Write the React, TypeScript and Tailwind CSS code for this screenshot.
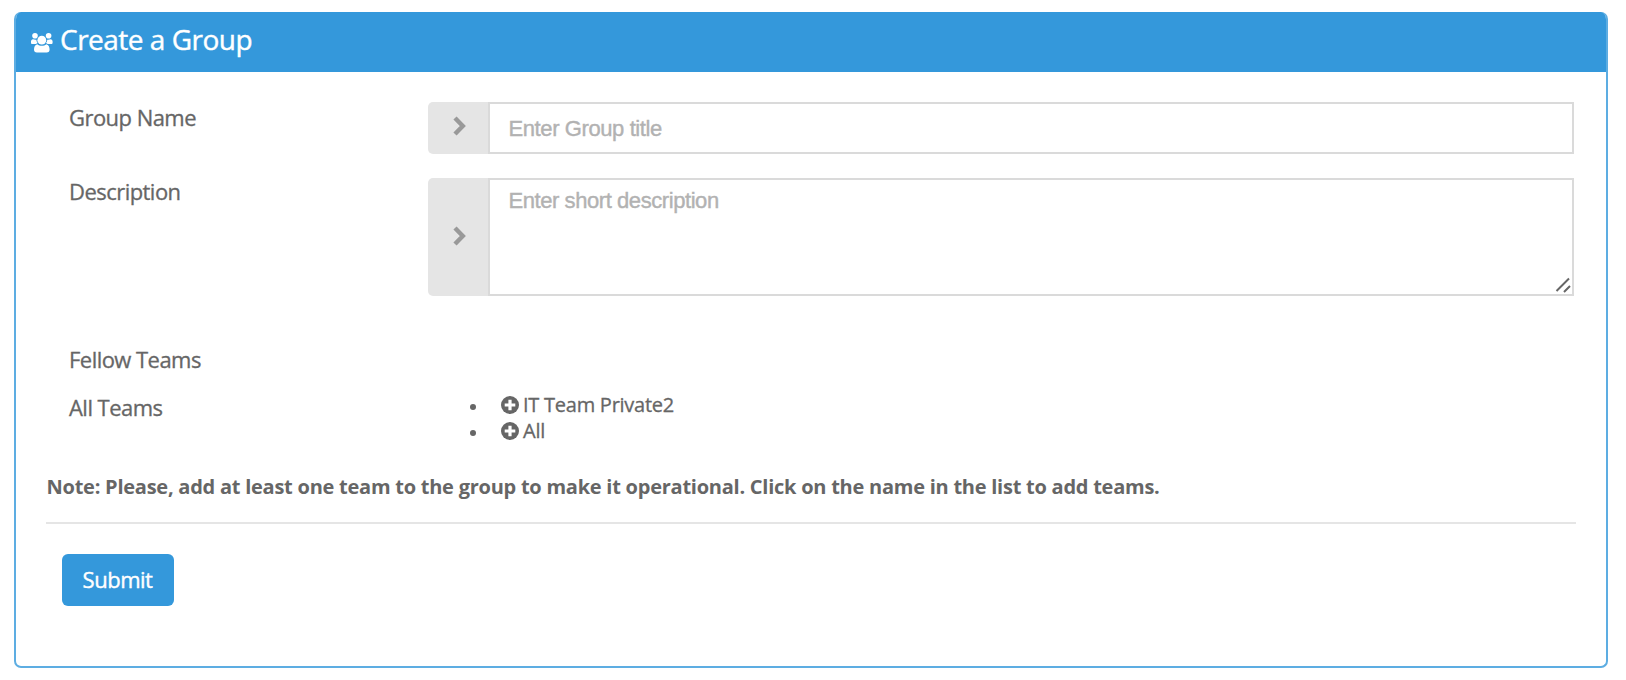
import type { ReactNode } from 'react';

function UsersIcon() {
  return (
    <svg width="22" height="20" viewBox="0 0 22 20" fill="#fff" className="mt-[21px] shrink-0">
      <circle cx="4" cy="2.8" r="2.8" />
      <circle cx="17.6" cy="2.8" r="2.8" />
      <path d="M2 6.3C.8 6.500 0 7.400 0 8.600v1.200c0 .8.5 1.200 1.300 1.200h3.600c.6-.5 1.100-.8 1.700-1C5.800 9 5.400 7.900 5.300 6.700 4.200 6.900 3 6.700 2 6.300z" />
      <path d="M19.600 6.300c1.200.2 2 1.100 2 2.300v1.200c0 .8-.5 1.200-1.300 1.200h-3.600c-.6-.5-1.100-.8-1.700-1 .8-1 1.200-2.100 1.300-3.300 1.100.2 2.300 0 3.300-.4z" />
      <circle cx="10.800" cy="7.200" r="4.400" />
      <path d="M6.300 11.300c1.200 1 2.700 1.500 4.500 1.500s3.300-.5 4.500-1.500c2.200.5 3.300 2.600 3.300 5.300 0 1.900-1 3-2.900 3H5.900c-1.900 0-2.900-1.100-2.900-3 0-2.700 1.100-4.800 3.300-5.300z" />
    </svg>
  );
}

function Chevron() {
  return (
    <svg width="14" height="20" viewBox="0 0 14 20" fill="none" stroke="#999" strokeWidth="4.400" strokeLinejoin="miter">
      <path d="M2 2l7.800 8L2 18" />
    </svg>
  );
}

function PlusCircle() {
  return (
    <svg width="18" height="18" viewBox="0 0 18 18" className="shrink-0">
      <circle cx="9" cy="9" r="9" fill="#666" />
      <path d="M9 3.700v10.600M3.700 9h10.600" stroke="#fff" strokeWidth="3.200" />
    </svg>
  );
}

function Label({ children }: { children: ReactNode }) {
  return (
    <div className="w-[359px] shrink-0 text-[22px] leading-[26px] tracking-[-0.54px] whitespace-nowrap [-webkit-text-stroke:0.3px]">
      {children}
    </div>
  );
}

function Addon({ children }: { children: ReactNode }) {
  return (
    <span className="flex w-[60px] shrink-0 items-center justify-center rounded-l-[5px] bg-[#e5e5e5] pl-[3px]">
      {children}
    </span>
  );
}

function TeamItem({ name }: { name: string }) {
  return (
    <li className="flex h-[26px] items-center">
      <span className="mt-[4px] mr-[25px] size-[6px] rounded-full bg-[#666]" />
      <PlusCircle />
      <span className="ml-[4px] whitespace-nowrap">{name}</span>
    </li>
  );
}

export default function App() {
  return (
    <div className="h-[680px] w-[1626px] bg-white pt-[12px] pl-[14px] font-['Open_Sans',sans-serif] text-[#666]">
      <section className="flex h-[656px] w-[1594px] flex-col overflow-hidden rounded-[7px] border-2 border-t-0 border-[#5dade2] bg-white">
        <header className="flex h-[60px] shrink-0 bg-[#3498db] pl-[15px] text-white">
          <UsersIcon />
          <h1 className="ml-[7px] pt-[9px] text-[28px] leading-[36px] tracking-[-0.5px] whitespace-nowrap [-webkit-text-stroke:0.4px]">
            Create a Group
          </h1>
        </header>
        <form className="flex flex-col px-[30px] pt-[30px]" onSubmit={(e) => e.preventDefault()}>
          <div className="flex h-[52px] pr-[2px] pl-[23px]">
            <div className="pt-[2px]">
              <Label>Group Name</Label>
            </div>
            <Addon>
              <span className="pb-[5px]">
                <Chevron />
              </span>
            </Addon>
            <input
              placeholder="Enter Group title"
              className="min-w-0 flex-1 border-2 border-[#dadada] px-[18.5px] font-['Liberation_Sans',sans-serif] text-[22px] tracking-[-0.4px] outline-none [-webkit-text-stroke:0.4px] placeholder:text-[#b2b2b2]"
            />
          </div>
          <div className="mt-[24px] flex h-[118px] pr-[2px] pl-[23px]">
            <Label>Description</Label>
            <Addon>
              <span className="pb-[3px]">
                <Chevron />
              </span>
            </Addon>
            <div className="relative flex min-w-0 flex-1">
              <textarea
                placeholder="Enter short description"
                className="w-full resize-none border-2 border-[#dadada] px-[18.5px] py-[8px] font-['Liberation_Sans',sans-serif] text-[22px] leading-[26px] tracking-[-0.43px] outline-none [-webkit-text-stroke:0.4px] placeholder:text-[#b2b2b2]"
              />
              <svg className="absolute right-[3px] bottom-[3px]" width="16" height="16" viewBox="0 0 16 16" stroke="#666" strokeWidth="2">
                <path d="M1.500 14L14 1.500M9 15l6-6" />
              </svg>
            </div>
          </div>
          <div className="mt-[50px] pl-[23px]">
            <Label>Fellow Teams</Label>
          </div>
          <div className="mt-[20px] flex h-[52px] pl-[23px]">
            <div className="pt-[2px]">
              <Label>All Teams</Label>
            </div>
            <ul className="pl-[42px] text-[20px] leading-[26px] tracking-[-0.25px] [-webkit-text-stroke:0.3px]">
              <TeamItem name="IT Team Private2" />
              <TeamItem name="All" />
            </ul>
          </div>
          <p className="mt-[30px] pl-[0.5px] text-[20px] leading-[26px] font-bold tracking-[-0.245px] whitespace-nowrap">
            Note: Please, add at least one team to the group to make it operational. Click on the name in the list to add teams.
          </p>
          <hr className="mt-[22px] border-t-2 border-[#e5e5e5]" />
          <button className="mt-[30px] ml-[16px] h-[52px] w-[112px] rounded-[6px] bg-[#3498db] pr-[1px] pb-[2px] text-[22px] leading-[50px] tracking-[-0.5px] text-white [-webkit-text-stroke:0.4px]">
            Submit
          </button>
        </form>
      </section>
    </div>
  );
}
